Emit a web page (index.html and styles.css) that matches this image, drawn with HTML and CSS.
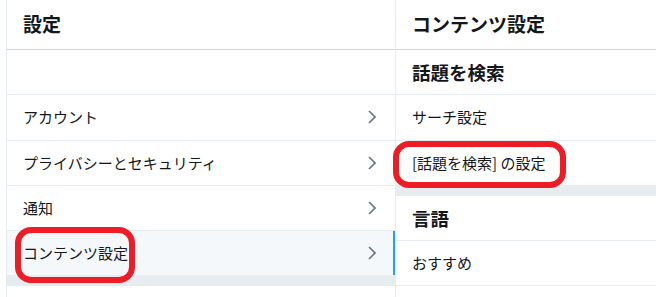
FILE: index.html
```html
<!DOCTYPE html>
<html lang="ja">
<head>
<meta charset="utf-8">
<link rel="stylesheet" href="styles.css">
</head>
<body>
<div class="app">
  <section class="col col-left">
    <header class="col-header"><h2>設定</h2></header>
    <div class="row row-empty"></div>
    <div class="row"><span>アカウント</span><svg class="chev" viewBox="0 0 8 14"><path d="M1 1 L7 7 L1 13"/></svg></div>
    <div class="row"><span>プライバシーとセキュリティ</span><svg class="chev" viewBox="0 0 8 14"><path d="M1 1 L7 7 L1 13"/></svg></div>
    <div class="row"><span>通知</span><svg class="chev" viewBox="0 0 8 14"><path d="M1 1 L7 7 L1 13"/></svg></div>
    <div class="row active"><span>コンテンツ設定</span><svg class="chev" viewBox="0 0 8 14"><path d="M1 1 L7 7 L1 13"/></svg></div>
    <div class="band"></div>
  </section>
  <section class="col col-right">
    <header class="col-header"><h2>コンテンツ設定</h2></header>
    <div class="row subheader">話題を検索</div>
    <div class="row"><span>サーチ設定</span></div>
    <div class="row"><span>[話題を検索] の設定</span></div>
    <div class="band"></div>
    <div class="row subheader">言語</div>
    <div class="row"><span>おすすめ</span></div>
  </section>
  <div class="mark mark-search"></div>
  <div class="mark mark-content"></div>
</div>
</body>
</html>
```

FILE: styles.css
```css
* { box-sizing: border-box; }
html, body { margin: 0; padding: 0; background: #ffffff; }
body {
  font-family: "Noto Sans CJK JP", "Noto Sans", sans-serif;
  color: #14171a;
  font-size: 15px;
  overflow: hidden;
}
.app {
  position: relative;
  display: flex;
  padding-left: 6px;
  height: 297px;
}
.col { display: flex; flex-direction: column; }
.col-left {
  width: 390px;
  border-left: 1px solid #e6ecf0;
  border-right: 1px solid #e6ecf0;
}
.col-right { flex: 1; }
.col-header {
  height: 50px;
  border-bottom: 1px solid #ccd6dd;
  display: flex;
  align-items: center;
  padding: 0 16px 1px;
}
.col-header h2 {
  margin: 0;
  font-size: 19px;
  font-weight: 700;
  line-height: 24px;
}
.row {
  height: 45.3px;
  flex: none;
  border-bottom: 1px solid #e6ecf0;
  display: flex;
  align-items: center;
  justify-content: space-between;
  padding: 0 19px 0 16px;
  line-height: 20px;
}
.row.subheader {
  font-size: 18.5px;
  font-weight: 700;
}
.row.active {
  background: #f5f8fa;
  box-shadow: inset -2px 0 0 #1da1f2;
}
.chev {
  width: 8px;
  height: 14px;
  fill: none;
  stroke: #657786;
  stroke-width: 1.6;
}
.band {
  height: 10px;
  flex: none;
  background: #e6ecf0;
}
.mark {
  position: absolute;
  border: 6px solid #ee1c25;
  border-radius: 16px;
}
.mark-search { left: 393px; top: 141px; width: 173px; height: 47px; }
.mark-content { left: 15px; top: 227px; width: 120px; height: 56px; }
```
